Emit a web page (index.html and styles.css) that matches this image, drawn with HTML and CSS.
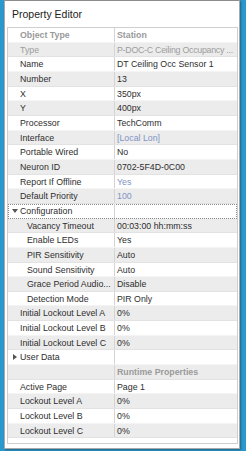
FILE: index.html
```html
<!DOCTYPE html>
<html lang="en">
<head>
    <meta charset="UTF-8">
    <title>Property Editor</title>
    <link rel="stylesheet" href="styles.css">
</head>
<body>
    <div class="panel">
        <div class="title">Property Editor</div>
        <div class="grid">
            <div class="row head"><span class="key">Object Type</span><span class="val">Station</span></div>
            <div class="row alt muted"><span class="key">Type</span><span class="val tight">P-DOC-C Ceiling Occupancy ...</span></div>
            <div class="row"><span class="key">Name</span><span class="val">DT Ceiling Occ Sensor 1</span></div>
            <div class="row alt"><span class="key">Number</span><span class="val">13</span></div>
            <div class="row"><span class="key">X</span><span class="val">350px</span></div>
            <div class="row alt"><span class="key">Y</span><span class="val">400px</span></div>
            <div class="row"><span class="key">Processor</span><span class="val">TechComm</span></div>
            <div class="row alt"><span class="key">Interface</span><span class="val link">[Local Lon]</span></div>
            <div class="row"><span class="key">Portable Wired</span><span class="val">No</span></div>
            <div class="row alt"><span class="key">Neuron ID</span><span class="val">0702-5F4D-0C00</span></div>
            <div class="row"><span class="key">Report If Offline</span><span class="val link">Yes</span></div>
            <div class="row alt"><span class="key">Default Priority</span><span class="val link">100</span></div>
            <div class="row group focus"><span class="key"><i class="tri down"></i>Configuration</span><span class="val"></span></div>
            <div class="row alt"><span class="key sub">Vacancy Timeout</span><span class="val">00:03:00 hh:mm:ss</span></div>
            <div class="row"><span class="key sub">Enable LEDs</span><span class="val">Yes</span></div>
            <div class="row alt"><span class="key sub">PIR Sensitivity</span><span class="val">Auto</span></div>
            <div class="row"><span class="key sub">Sound Sensitivity</span><span class="val">Auto</span></div>
            <div class="row alt"><span class="key sub">Grace Period Audio...</span><span class="val">Disable</span></div>
            <div class="row"><span class="key sub">Detection Mode</span><span class="val">PIR Only</span></div>
            <div class="row alt"><span class="key">Initial Lockout Level A</span><span class="val">0%</span></div>
            <div class="row"><span class="key">Initial Lockout Level B</span><span class="val">0%</span></div>
            <div class="row alt"><span class="key">Initial Lockout Level C</span><span class="val">0%</span></div>
            <div class="row group"><span class="key"><i class="tri right"></i>User Data</span><span class="val"></span></div>
            <div class="row alt head"><span class="key"></span><span class="val">Runtime Properties</span></div>
            <div class="row"><span class="key">Active Page</span><span class="val">Page 1</span></div>
            <div class="row alt"><span class="key">Lockout Level A</span><span class="val">0%</span></div>
            <div class="row"><span class="key">Lockout Level B</span><span class="val">0%</span></div>
            <div class="row alt"><span class="key">Lockout Level C</span><span class="val">0%</span></div>
            <div class="filler"></div>
        </div>
    </div>
</body>
</html>
```

FILE: styles.css
```css
*{
    margin: 0;
    padding: 0;
    box-sizing: border-box;
}

html,body{
    height: 100%;
}

body{
    background-color: #2b98cc;
    font-family: "Liberation Sans", Arial, sans-serif;
    color: #2e2e2e;
    overflow: hidden;
}

.panel{
    margin-left: 4px;
    width: 236px;
    height: 449px;
    background-color: #ffffff;
    border: 1px solid #a9a9a9;
    border-top-color: #8c8c8c;
    box-shadow: 1px 1px 2px rgba(0, 0, 0, 0.35);
    display: flex;
    flex-direction: column;
}

.title{
    height: 26px;
    padding-left: 7px;
    line-height: 26px;
    font-size: 10.5px;
    color: #222;
}

.grid{
    margin-left: 2px;
    width: 231px;
    height: 417px;
    border: 1px solid #cfcfcf;
    display: flex;
    flex-direction: column;
}

.row{
    height: 14.66px;
    line-height: 14.66px;
    font-size: 8.8px;
    display: grid;
    grid-template-columns: 107px 1fr;
    background-color: #ffffff;
    border-bottom: 1px solid #f4f4f4;
}

.row.alt{
    background-color: #ececec;
    border-bottom-color: #e2e2e2;
}

.row .key{
    padding-left: 12px;
    border-right: 1px solid #d4d4d4;
    white-space: nowrap;
    overflow: hidden;
    position: relative;
}

.row .key.sub{
    padding-left: 19px;
}

.row .val{
    padding-left: 2px;
    white-space: nowrap;
    overflow: hidden;
}

.val.tight{
    letter-spacing: -0.25px;
}

.row.head{
    font-weight: bold;
    color: #9a9a9a;
}

.row.muted{
    color: #9c9c9c;
}

.val.link{
    color: #7f93c4;
}

.row.focus{
    outline: 1px dotted #8a8a8a;
    outline-offset: -1px;
}

.tri{
    position: absolute;
    left: 4px;
    top: 5px;
    width: 0;
    height: 0;
}

.tri.down{
    border-left: 3px solid transparent;
    border-right: 3px solid transparent;
    border-top: 4px solid #555;
}

.tri.right{
    top: 4px;
    left: 5px;
    border-top: 3px solid transparent;
    border-bottom: 3px solid transparent;
    border-left: 4px solid #555;
}

.filler{
    flex: 1;
    background-color: #ffffff;
}
```
